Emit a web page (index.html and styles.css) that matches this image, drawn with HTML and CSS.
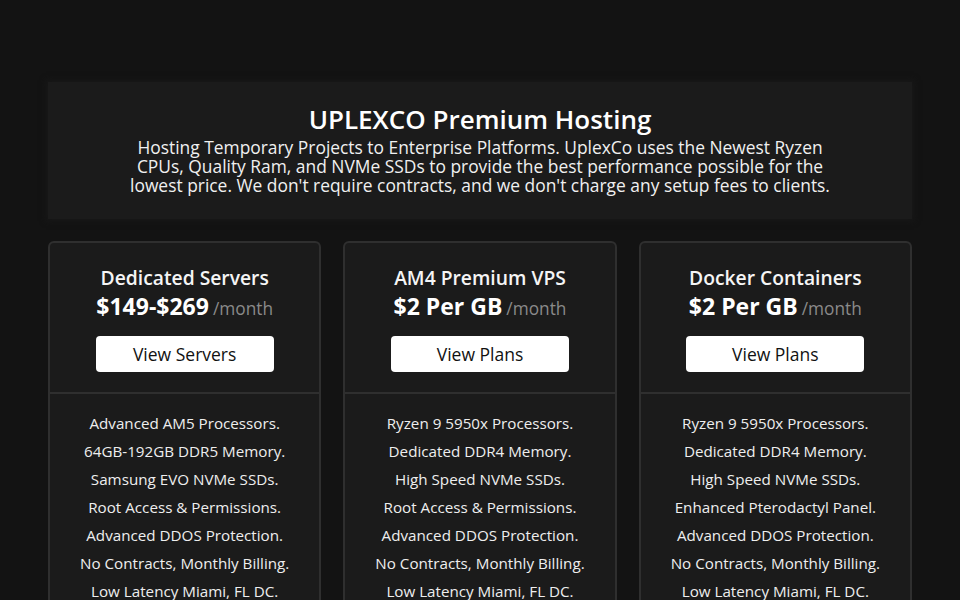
FILE: index.html
```html
<!DOCTYPE html>
<html lang="en">
<head>
<meta charset="utf-8">
<title>UPLEXCO Premium Hosting</title>
<link rel="stylesheet" href="styles.css">
</head>
<body>
<main class="page">
  <section class="hero">
    <h1 class="hero-title">UPLEXCO Premium Hosting</h1>
    <p class="hero-text">Hosting Temporary Projects to Enterprise Platforms. UplexCo uses the Newest Ryzen CPUs, Quality Ram, and NVMe SSDs to provide the best performance possible for the lowest price. We don't require contracts, and we don't charge any setup fees to clients.</p>
  </section>
  <section class="plans">
    <article class="card">
      <div class="card-head">
        <h2 class="card-title">Dedicated Servers</h2>
        <div class="price"><span class="amount">$149-$269</span><span class="per">/month</span></div>
        <a class="btn" href="#">View Servers</a>
      </div>
      <ul class="features">
        <li>Advanced AM5 Processors.</li>
        <li>64GB-192GB DDR5 Memory.</li>
        <li>Samsung EVO NVMe SSDs.</li>
        <li>Root Access &amp; Permissions.</li>
        <li>Advanced DDOS Protection.</li>
        <li>No Contracts, Monthly Billing.</li>
        <li>Low Latency Miami, FL DC.</li>
      </ul>
    </article>
    <article class="card">
      <div class="card-head">
        <h2 class="card-title">AM4 Premium VPS</h2>
        <div class="price"><span class="amount">$2 Per GB</span><span class="per">/month</span></div>
        <a class="btn" href="#">View Plans</a>
      </div>
      <ul class="features">
        <li>Ryzen 9 5950x Processors.</li>
        <li>Dedicated DDR4 Memory.</li>
        <li>High Speed NVMe SSDs.</li>
        <li>Root Access &amp; Permissions.</li>
        <li>Advanced DDOS Protection.</li>
        <li>No Contracts, Monthly Billing.</li>
        <li>Low Latency Miami, FL DC.</li>
      </ul>
    </article>
    <article class="card">
      <div class="card-head">
        <h2 class="card-title">Docker Containers</h2>
        <div class="price"><span class="amount">$2 Per GB</span><span class="per">/month</span></div>
        <a class="btn" href="#">View Plans</a>
      </div>
      <ul class="features">
        <li>Ryzen 9 5950x Processors.</li>
        <li>Dedicated DDR4 Memory.</li>
        <li>High Speed NVMe SSDs.</li>
        <li>Enhanced Pterodactyl Panel.</li>
        <li>Advanced DDOS Protection.</li>
        <li>No Contracts, Monthly Billing.</li>
        <li>Low Latency Miami, FL DC.</li>
      </ul>
    </article>
  </section>
</main>
</body>
</html>
```
FILE: styles.css
```css
* { box-sizing: border-box; }
html, body {
  margin: 0;
  background: #131313;
  color: #f2f2f2;
  font-family: "Open Sans", "DejaVu Sans", sans-serif;
}
.page {
  width: 864px;
  margin: 0 auto;
  padding-top: 82px;
}
.hero {
  background: #1b1b1b;
  box-shadow: 0 0 6px 2px #181818;
  padding: 22px 24px 24px;
  text-align: center;
}
.hero-title {
  margin: 0 0 4px;
  font-size: 26px;
  line-height: 30px;
  font-weight: 600;
  color: #ffffff;
}
.hero-text {
  margin: 0 auto;
  max-width: 716px;
  font-size: 17.4px;
  line-height: 19px;
  color: #f0f0f0;
}
.plans {
  display: grid;
  grid-template-columns: repeat(3, 1fr);
  gap: 22px;
  margin-top: 22px;
}
.card {
  background: #1b1b1b;
  border: 2px solid #2f2f2f;
  border-bottom: none;
  border-radius: 6px 6px 0 0;
  height: 400px;
}
.card-head {
  display: flex;
  flex-direction: column;
  align-items: center;
  padding: 23px 0 20px;
  border-bottom: 2px solid #2f2f2f;
}
.card-title {
  margin: 0;
  font-size: 19.3px;
  line-height: 24px;
  font-weight: 600;
  color: #f5f5f5;
}
.price {
  display: flex;
  align-items: baseline;
  gap: 4px;
  margin-top: 2px;
}
.amount {
  font-size: 23px;
  line-height: 28px;
  font-weight: 700;
  color: #ffffff;
}
.per {
  font-size: 17.3px;
  color: #8a8a8a;
}
.btn {
  display: flex;
  align-items: center;
  justify-content: center;
  width: 178px;
  height: 36px;
  margin-top: 16px;
  background: #ffffff;
  border-radius: 4px;
  color: #111111;
  text-decoration: none;
  font-size: 17.5px;
}
.features {
  list-style: none;
  margin: 0;
  padding: 15px 0 0;
  text-align: center;
}
.features li {
  font-size: 15.2px;
  line-height: 28px;
  color: #eeeeee;
}
```
